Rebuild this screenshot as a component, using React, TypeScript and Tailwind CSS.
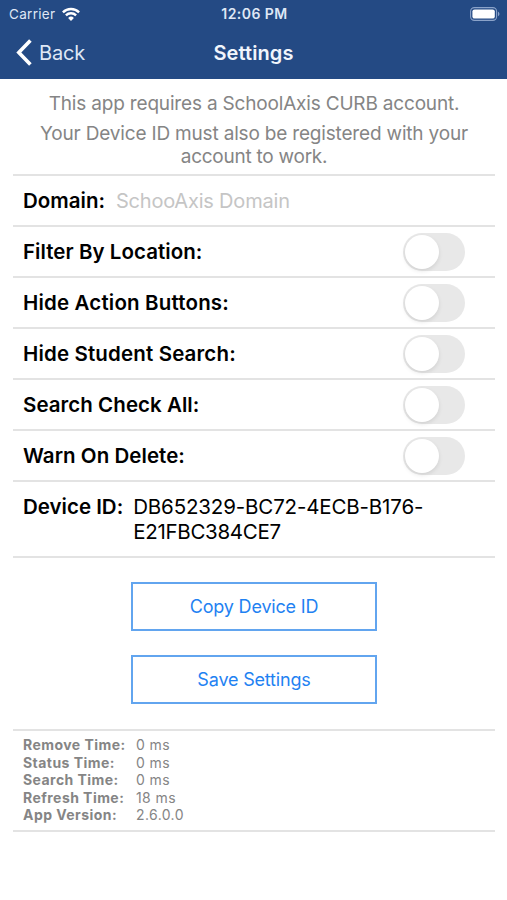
import React, { useState } from 'react';

const TOGGLES = [
  { label: 'Filter By Location:', tracking: 'tracking-[0.05px]' },
  { label: 'Hide Action Buttons:', tracking: 'tracking-[0.17px]' },
  { label: 'Hide Student Search:', tracking: 'tracking-[0.15px]' },
  { label: 'Search Check All:', tracking: 'tracking-[0.05px]' },
  { label: 'Warn On Delete:', tracking: 'tracking-[0.05px]' },
];

const STATS = [
  { label: 'Remove Time:', value: '0 ms' },
  { label: 'Status Time:', value: '0 ms' },
  { label: 'Search Time:', value: '0 ms' },
  { label: 'Refresh Time:', value: '18 ms' },
  { label: 'App Version:', value: '2.6.0.0' },
];

function StatusBar() {
  return (
    <div className="grid h-7 grid-cols-3 items-center pl-[9px] pr-[7px] text-[13.5px] leading-none text-[#dfe7f5]">
      <div className="flex items-center gap-[7px]">
        <span className="pt-px tracking-[0.3px]">Carrier</span>
        <svg className="h-[14px] w-[18px]" viewBox="0 0 18 14" fill="none" stroke="white" strokeWidth="2.4">
          <path d="M0.9 5.3a11.5 11.5 0 0 1 16.2 0" />
          <path d="M3.9 8.4a7.2 7.2 0 0 1 10.2 0" />
          <path d="M9 13.9l-2.9-3a4.1 4.1 0 0 1 5.8 0z" fill="white" stroke="none" />
        </svg>
      </div>
      <div className="whitespace-nowrap text-center text-[14px] font-semibold tracking-[0.45px]">12:06 PM</div>
      <div className="flex justify-end">
        <svg className="h-[14px] w-[30px]" viewBox="0 0 30 14">
          <rect x="0.6" y="0.6" width="26" height="12.8" rx="3.8" fill="none" stroke="#8ba3c9" strokeWidth="1.1" />
          <rect x="2.4" y="2.4" width="22.4" height="9.2" rx="2.2" fill="white" />
          <path d="M28 4.8c1.9.7 1.9 3.7 0 4.4z" fill="#8ba3c9" />
        </svg>
      </div>
    </div>
  );
}

function NavBar() {
  return (
    <div className="grid h-[49px] grid-cols-3 items-center px-4 text-[20px] leading-none text-[#f1f5fc]">
      <button type="button" className="flex items-center gap-[7px] text-left">
        <svg className="h-[27px] w-4" viewBox="0 0 16 27" fill="none" stroke="white" strokeWidth="3.6">
          <path d="M14.4 1.4 2.8 13.5l11.6 12.1" />
        </svg>
        <span className="tracking-[-0.2px] text-[#dfe7f5]">Back</span>
      </button>
      <h1 className="text-center font-semibold tracking-[0.1px]">Settings</h1>
    </div>
  );
}

function Toggle() {
  const [on, setOn] = useState(false);

  return (
    <button
      type="button"
      role="switch"
      aria-checked={on}
      onClick={() => setOn(!on)}
      className={`flex h-[38px] w-[62px] items-center rounded-full p-[2px] ${on ? 'justify-end bg-green-500' : 'bg-[#e8e8e8]'}`}
    >
      <span className="size-[34px] rounded-full bg-white shadow-[0_2px_4px_rgba(0,0,0,0.1)]" />
    </button>
  );
}

export default function App() {
  return (
    <div className="h-[900px] w-full overflow-hidden bg-white font-['Inter','Liberation_Sans',sans-serif] text-black [font-feature-settings:'calt'_0]">
      <header className="h-[79px] bg-[#244a84]">
        <StatusBar />
        <NavBar />
      </header>

      <main className="pl-[13px] pr-3">
        {/* Intro */}
        <div className="h-[95px] pt-[13px] text-center text-[19px] leading-6 tracking-[-0.18px] text-[#858585]">
          <p>This app requires a SchoolAxis CURB account.</p>
          <p className="mt-[6px] leading-[23px]">
            Your Device ID must also be registered with your
            <br />
            <span className="tracking-[-0.25px]">account to work.</span>
          </p>
        </div>

        <div className="flex h-[51px] items-center border-t-2 border-[#e3e3e3] pl-[10px] text-[20.5px]">
          <span className="pt-[2px] font-semibold">Domain:</span>
          <input
            placeholder="SchooAxis Domain"
            className="ml-[11px] w-[300px] bg-transparent text-[20px] tracking-[-0.2px] outline-none placeholder:text-[#c5c5c5]"
          />
        </div>

        {TOGGLES.map((row) => (
          <div key={row.label} className="flex h-[51px] items-center justify-between border-t-2 border-[#e3e3e3] pl-[10px] pr-[30px]">
            <span className={`pt-[2px] text-[20.5px] font-semibold ${row.tracking}`}>{row.label}</span>
            <Toggle />
          </div>
        ))}

        <div className="flex h-[78px] border-y-2 border-[#e3e3e3] pl-[10px] pt-[12px] text-[20.5px] leading-[25px]">
          <span className="font-semibold">Device ID:</span>
          <span className="ml-[10px] tracking-[-0.15px]">
            DB652329-BC72-4ECB-B176-
            <br />
            <span className="tracking-[-0.3px]">E21FBC384CE7</span>
          </span>
        </div>

        {/* Actions */}
        <div className="flex h-[171px] flex-col items-center gap-6 pt-6 text-[18px] tracking-[-0.18px] text-[#1f82f2]">
          <button type="button" className="h-[49px] w-[246px] border-2 border-[#62a5ef]">Copy Device ID</button>
          <button type="button" className="h-[49px] w-[246px] border-2 border-[#62a5ef]">Save Settings</button>
        </div>

        {/* Timings */}
        <dl className="h-[103px] border-y-2 border-[#e3e3e3] pl-[10px] pt-[5px] text-[14px] leading-[17.5px] text-[#858585]">
          {STATS.map((stat) => (
            <div key={stat.label} className="flex">
              <dt className="w-[113px] font-bold tracking-[0.45px]">{stat.label}</dt>
              <dd className="tracking-[0.4px]">{stat.value}</dd>
            </div>
          ))}
        </dl>
      </main>
    </div>
  );
}
